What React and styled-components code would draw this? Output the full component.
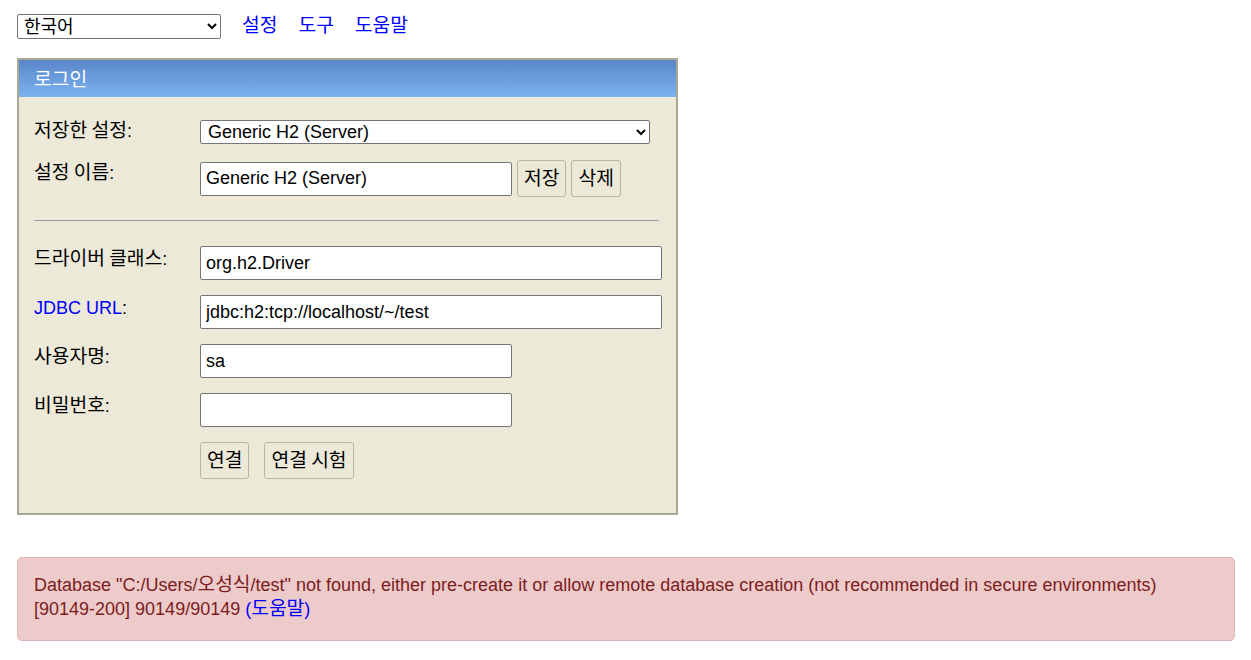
import React from "react";
import styled, { createGlobalStyle } from "styled-components";

const GlobalStyle = createGlobalStyle`
  body {
    margin: 0;
    background: #ffffff;
    font-family: "Liberation Sans", Arial, "Noto Sans CJK KR", sans-serif;
    font-size: 18px;
    color: #000000;
  }
`;

// Hangul from Noto CJK is narrower than the original's Malgun Gothic
const Ko = styled.span`
  font-family: "Noto Sans CJK KR", sans-serif;
  font-size: 1.07em;
  line-height: 1;
`;

const Page = styled.div`
  padding: 14px 16px 20px 17px;
`;

const TopBar = styled.div`
  display: flex;
  align-items: center;
  gap: 21px;
  height: 25px;
`;

const LangSelect = styled.select`
  width: 204px;
  height: 25px;
  font: inherit;
  font-size: 18px;
  padding: 0 2px;
  border: 1px solid #767676;
  border-radius: 2px;
  background: #fff;
  color: #000;
`;

const Links = styled.div`
  display: flex;
  gap: 21px;
  margin-top: -1px;
`;

const Link = styled.a`
  color: #0000ff;
  text-decoration: none;
  cursor: pointer;
`;

const Panel = styled.div`
  margin-top: 19px;
  width: 657px;
  border: 2px solid #aaa794;
  background: #ece9d8;
`;

const PanelHeader = styled.div`
  height: 37px;
  display: flex;
  align-items: center;
  padding-left: 15px;
  background: linear-gradient(to bottom, #5987c9, #7cb2f2);
  color: #ffffff;
`;

const PanelBody = styled.div`
  padding: 23px 15px 34px 15px;
`;

const Row = styled.div`
  display: grid;
  grid-template-columns: 166px 1fr;
  align-items: start;
  margin-top: ${(p) => p.$gap || 0}px;
`;

const Label = styled.div`
  padding-top: ${(p) => p.$pad ?? 2}px;
  line-height: 22px;
  color: ${(p) => (p.$link ? "#0000ff" : "#000")};
`;

const Colon = styled.span`
  color: #000;
`;

const Blue = styled.span`
  color: #0000ff;
`;

const Field = styled.div`
  display: flex;
  align-items: center;
  gap: ${(p) => p.$gap || 5}px;
`;

const ProfileSelect = styled.select`
  width: 450px;
  height: 24px;
  font: inherit;
  font-size: 18px;
  padding: 0 3px;
  border: 1px solid #767676;
  border-radius: 2px;
  background: #fff;
  color: #000;
`;

const TextInput = styled.input`
  box-sizing: border-box;
  width: ${(p) => (p.$wide ? 462 : 312)}px;
  height: 34px;
  font: inherit;
  font-size: 18px;
  padding: 0 5px;
  border: 1px solid #767676;
  border-radius: 2px;
  background: #fff;
  color: #000;
`;

const Button = styled.button`
  box-sizing: border-box;
  height: 37px;
  padding: 0 6px;
  font: inherit;
  font-size: 18px;
  background: #ece9d8;
  border: 1px solid #b8b5a2;
  border-radius: 3px;
  color: #000;
`;

const Divider = styled.hr`
  margin: 23px 2px 25px 0;
  border: none;
  border-top: 1px solid #9a9aaa;
  height: 0;
`;

const ErrorBox = styled.div`
  margin-top: 42px;
  padding: 15px 16px 19px 16px;
  background: #eecbcb;
  border: 1px solid #e0b4b4;
  border-radius: 5px;
  color: #7c1c1c;
  line-height: 24px;
`;

export default function App() {
  return (
    <>
      <GlobalStyle />
      <Page>
        <TopBar>
          <LangSelect defaultValue="ko">
            <option value="ko">한국어</option>
          </LangSelect>
          <Links>
            <Link><Ko>설정</Ko></Link>
            <Link><Ko>도구</Ko></Link>
            <Link><Ko>도움말</Ko></Link>
          </Links>
        </TopBar>

        <Panel>
          <PanelHeader><Ko>로그인</Ko></PanelHeader>
          <PanelBody>
            <Row>
              <Label $pad={0}><Ko>저장한 설정</Ko>:</Label>
              <Field>
                <ProfileSelect defaultValue="server">
                  <option value="server">Generic H2 (Server)</option>
                </ProfileSelect>
              </Field>
            </Row>
            <Row $gap={16}>
              <Label><Ko>설정 이름</Ko>:</Label>
              <Field>
                <TextInput defaultValue="Generic H2 (Server)" />
                <Button><Ko>저장</Ko></Button>
                <Button><Ko>삭제</Ko></Button>
              </Field>
            </Row>

            <Divider />

            <Row>
              <Label><Ko>드라이버 클래스</Ko>:</Label>
              <Field>
                <TextInput $wide defaultValue="org.h2.Driver" />
              </Field>
            </Row>
            <Row $gap={15}>
              <Label $link>
                JDBC URL<Colon>:</Colon>
              </Label>
              <Field>
                <TextInput $wide defaultValue="jdbc:h2:tcp://localhost/~/test" />
              </Field>
            </Row>
            <Row $gap={15}>
              <Label><Ko>사용자명</Ko>:</Label>
              <Field>
                <TextInput defaultValue="sa" />
              </Field>
            </Row>
            <Row $gap={15}>
              <Label><Ko>비밀번호</Ko>:</Label>
              <Field>
                <TextInput type="password" />
              </Field>
            </Row>
            <Row $gap={15}>
              <Label />
              <Field $gap={15}>
                <Button><Ko>연결</Ko></Button>
                <Button><Ko>연결 시험</Ko></Button>
              </Field>
            </Row>
          </PanelBody>
        </Panel>

        <ErrorBox>
          Database "C:/Users/<Ko>오성식</Ko>/test" not found, either pre-create it or allow
          remote database creation (not recommended in secure environments)
          <br />
          [90149-200] 90149/90149 <Blue>(<Ko>도움말</Ko>)</Blue>
        </ErrorBox>
      </Page>
    </>
  );
}
